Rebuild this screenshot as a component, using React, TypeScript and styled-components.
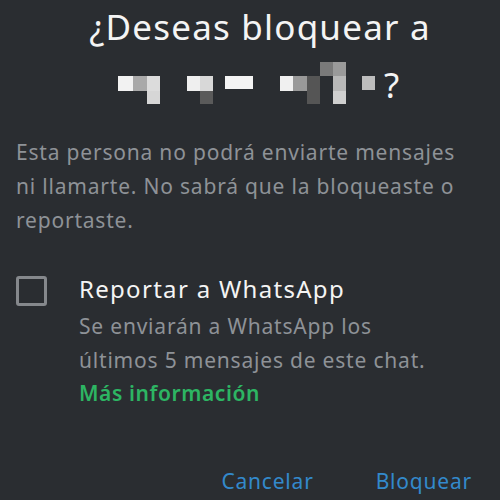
import React from 'react'
import styled, { createGlobalStyle } from 'styled-components';

const GlobalStyle = createGlobalStyle`
  html, body {
    margin: 0;
    padding: 0;
    background: #2a2d31;
  }
  * { box-sizing: border-box; }
`;

// pixelated contact name: [x, y, w, h, colour]
const nameBlocks: [number, number, number, number, string][] = [
  [0, 14, 15, 15, '#f2f2f2'],
  [15, 14, 14, 15, '#a9a9a9'],
  [29, 14, 13, 15, '#dcdcdc'],
  [29, 29, 13, 13, '#d6d6d6'],
  [69, 14, 13, 15, '#efefef'],
  [82, 14, 13, 15, '#d8d8d8'],
  [82, 29, 13, 13, '#5a5a5a'],
  [107, 14, 28, 13, '#f4f4f4'],
  [162, 14, 13, 15, '#f0f0f0'],
  [175, 14, 14, 15, '#999999'],
  [189, 14, 13, 28, '#555555'],
  [202, 0, 13, 14, '#7a7a7a'],
  [215, 0, 13, 14, '#9a9a9a'],
  [215, 14, 13, 15, '#b8b8b8'],
  [215, 29, 13, 13, '#cfcfcf'],
  [244, 14, 13, 14, '#bdbdbd'],
];

const App: React.FC = () => {
  return (
    <>
      <GlobalStyle />
      <Dialog>
        <Title>
          <TitleLine>¿Deseas bloquear a</TitleLine>
          <NameLine>
            <svg width="258" height="42" viewBox="0 0 258 42">
              {nameBlocks.map(([x, y, w, h, c], i) => (
                <rect key={i} x={x} y={y} width={w} height={h} fill={c} />
              ))}
            </svg>
            <span>?</span>
          </NameLine>
        </Title>

        <Message>
          Esta persona no podrá enviarte mensajes<br />
          ni llamarte. No sabrá que la bloqueaste o<br />
          reportaste.
        </Message>

        <Option>
          <Checkbox />
          <OptionText>
            <OptionLabel>Reportar a WhatsApp</OptionLabel>
            <OptionHint>
              Se enviarán a WhatsApp los<br />
              últimos 5 mensajes de este chat.
            </OptionHint>
            <MoreLink>Más información</MoreLink>
          </OptionText>
        </Option>

        <Actions>
          <ActionButton>Cancelar</ActionButton>
          <ActionButton>Bloquear</ActionButton>
        </Actions>
      </Dialog>
    </>
  );
};

export default App

const Dialog = styled.div`
    width: 500px;
    height: 500px;
    overflow: hidden;
    display: flex;
    flex-direction: column;
    background: #2a2d31;
    font-family: "Noto Sans", "Open Sans", sans-serif;
`;

const Title = styled.h1`
    margin: 2px 0 0;
    color: #f4f4f4;
    font-size: 35px;
    font-weight: 400;
    letter-spacing: 1.2px;
    line-height: 50px;
`;

const TitleLine = styled.div`
    text-align: center;
    padding-left: 20px;
`;

const NameLine = styled.div`
    display: flex;
    align-items: flex-end;
    gap: 8px;
    padding-left: 118px;
    height: 58px;

    svg {
        display: block;
        margin-bottom: 6px;
    }
    span {
        line-height: 50px;
    }
`;

const Message = styled.p`
    margin: 25px 0 0;
    padding: 0 16px;
    color: #8e9297;
    font-size: 21px;
    letter-spacing: 0.8px;
    line-height: 34px;
`;

const Option = styled.div`
    display: flex;
    align-items: flex-start;
    gap: 32px;
    margin-top: 37px;
    padding: 0 16px;
`;

const Checkbox = styled.div`
    flex: none;
    width: 31px;
    height: 30px;
    margin-top: 2px;
    border: 3px solid #85888c;
    border-radius: 3px;
`;

const OptionText = styled.div`
    display: flex;
    flex-direction: column;
`;

const OptionLabel = styled.div`
    color: #f4f4f4;
    font-size: 24px;
    letter-spacing: 1.3px;
    line-height: 30px;
`;

const OptionHint = styled.div`
    margin-top: 5px;
    color: #8e9297;
    font-size: 21px;
    letter-spacing: 0.8px;
    line-height: 34px;
`;

const MoreLink = styled.a`
    margin-top: -1px;
    color: #2db563;
    font-size: 21px;
    font-weight: 600;
    letter-spacing: 0.6px;
    line-height: 34px;
`;

const Actions = styled.div`
    margin-top: auto;
    display: flex;
    justify-content: flex-end;
    gap: 62px;
    padding: 0 28px 2px 0;
`;

const ActionButton = styled.button`
    background: none;
    border: none;
    padding: 0;
    color: #3389cb;
    font-family: inherit;
    font-size: 21px;
    letter-spacing: 0.8px;
    line-height: 34px;
    cursor: pointer;
`;
